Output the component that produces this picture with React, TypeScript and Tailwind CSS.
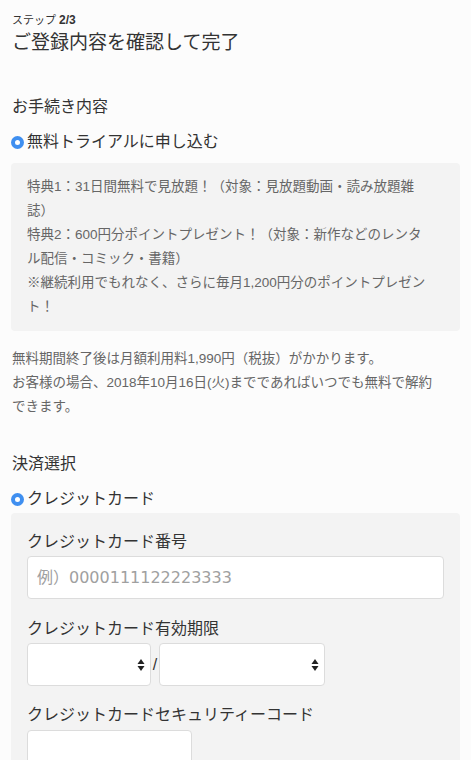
import React from 'react';

const Radio: React.FC = () => (
    <span className="w-[13px] h-[13px] rounded-full bg-[#3f8ff0] flex items-center justify-center shrink-0">
        <span className="w-[5px] h-[5px] rounded-full bg-white"></span>
    </span>
);

const SelectBox: React.FC<{ width: string }> = ({ width }) => (
    <div className={`${width} h-[43px] bg-white border border-[#dcdcdc] rounded-[4px] flex items-center justify-end pr-[5px]`}>
        <svg width="8" height="14" viewBox="0 0 8 14">
            <path d="M4 1 L7.5 6 L0.5 6 Z" fill="#222" />
            <path d="M4 13 L7.5 8 L0.5 8 Z" fill="#222" />
        </svg>
    </div>
);

export default function App() {
    return (
        <div className="h-[760px] overflow-hidden bg-[#fcfcfc] text-[#333] px-[11px] font-['Liberation_Sans','Noto_Sans_CJK_JP',sans-serif]">
            {/* header */}
            <div className="pl-px pt-[12px] text-[11px] leading-[16px]">
                ステップ <span className="font-bold text-[12px]">2/3</span>
            </div>
            <h1 className="pl-px text-[19px] leading-[28px] mt-[1px]">ご登録内容を確認して完了</h1>

            {/* お手続き内容 */}
            <h2 className="pl-px text-[16px] leading-[24px] mt-[38px]">お手続き内容</h2>
            <div className="flex items-center gap-[3px] mt-[11px] h-[24px]">
                <Radio />
                <span className="text-[16px] leading-[24px]">無料トライアルに申し込む</span>
            </div>
            <div className="mt-[9px] bg-[#f3f3f3] rounded-[4px] px-4 py-[12px] text-[13.5px] leading-[24px] text-[#666]">
                特典1：31日間無料で見放題！（対象：見放題動画・読み放題雑<br />
                誌）<br />
                特典2：600円分ポイントプレゼント！（対象：新作などのレンタ<br />
                ル配信・コミック・書籍）<br />
                ※継続利用でもれなく、さらに毎月1,200円分のポイントプレゼン<br />
                ト！
            </div>
            <p className="pl-px mt-[16px] text-[13.5px] leading-[24px] text-[#666]">
                無料期間終了後は月額利用料1,990円（税抜）がかかります。<br />
                お客様の場合、2018年10月16日(火)までであればいつでも無料で解約<br />
                できます。
            </p>

            {/* 決済選択 */}
            <h2 className="pl-px text-[16px] leading-[24px] mt-[33px]">決済選択</h2>
            <div className="flex items-center gap-[3px] mt-[11px] h-[24px]">
                <Radio />
                <span className="text-[16px] leading-[24px]">クレジットカード</span>
            </div>
            <div className="mt-[2px] bg-[#f3f3f3] rounded-t-[4px] px-4 pt-[17px] pb-6">
                <label className="block text-[16px] leading-[24px]">クレジットカード番号</label>
                <input
                    className="mt-[2px] w-full h-[43px] bg-white border border-[#dcdcdc] rounded-[4px] px-[9px] text-[16px] font-['DejaVu_Sans','Noto_Sans_CJK_JP',sans-serif] placeholder-[#a0a0a0] outline-none"
                    placeholder="例）0000111122223333"
                />
                <label className="block mt-[18px] text-[16px] leading-[24px]">クレジットカード有効期限</label>
                <div className="mt-[2px] flex items-center">
                    <SelectBox width="w-[124px]" />
                    <span className="w-[8px] text-center text-[16px] text-[#333]">/</span>
                    <SelectBox width="w-[166px]" />
                </div>
                <label className="block mt-[17px] text-[16px] leading-[24px]">クレジットカードセキュリティーコード</label>
                <input className="mt-[3px] w-[165px] h-[43px] bg-white border border-[#dcdcdc] rounded-[4px] px-[9px] text-[16px] outline-none" />
            </div>
        </div>
    );
}
